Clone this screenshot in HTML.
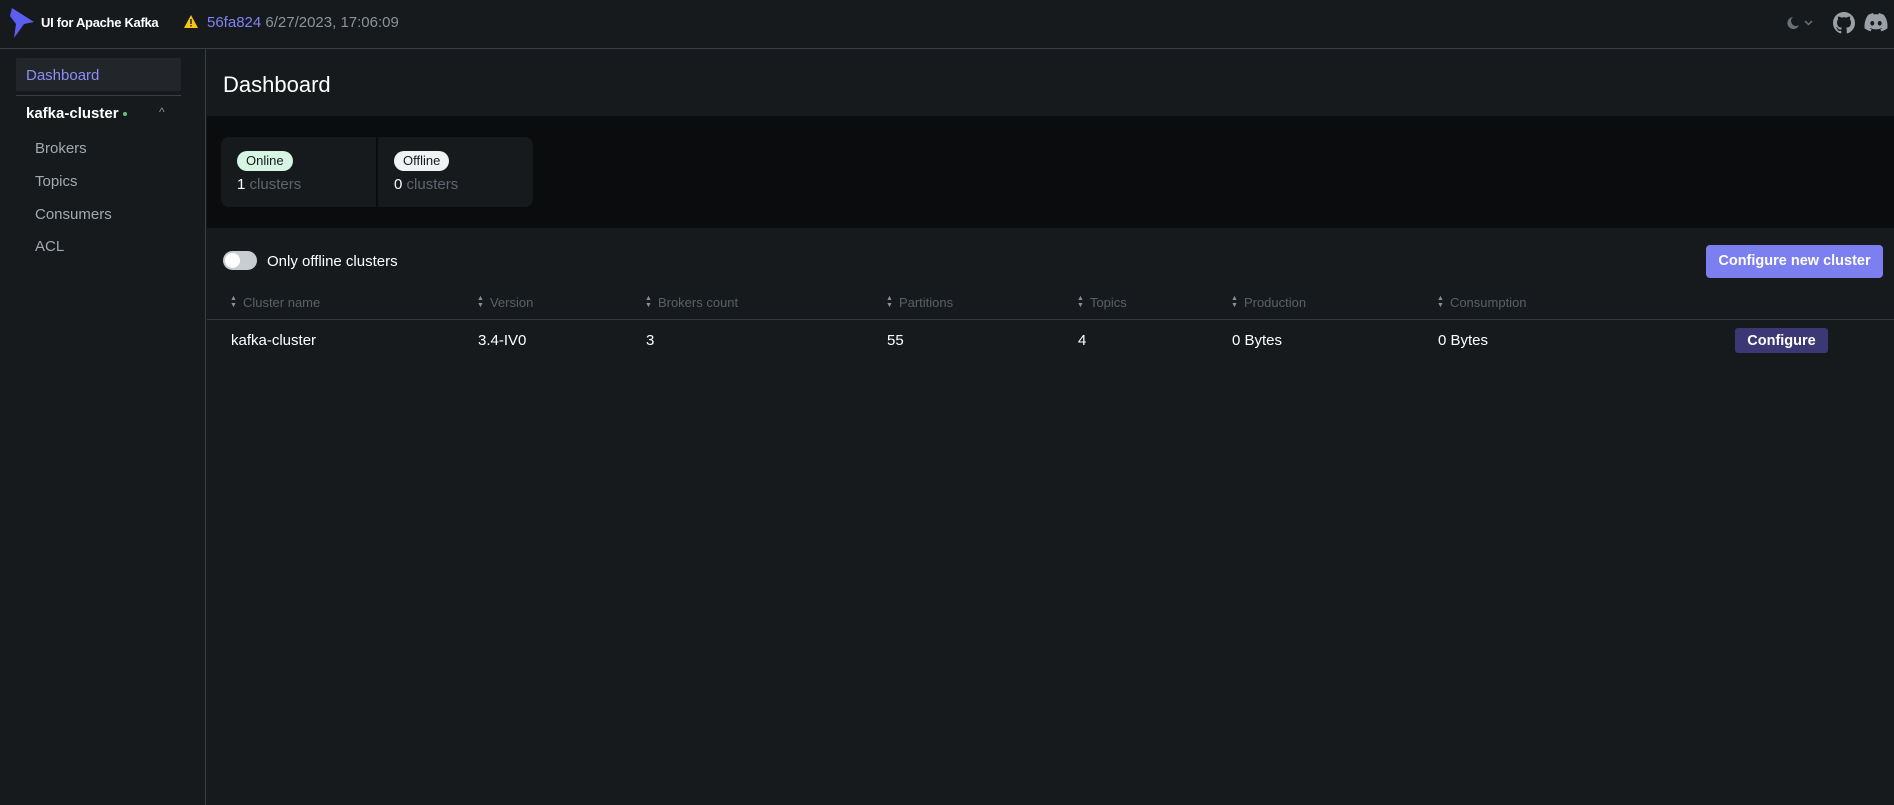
<!DOCTYPE html>
<html><head><meta charset="utf-8"><style>
*{box-sizing:border-box;margin:0;padding:0}
body{width:1894px;height:805px;background:#171a1d;font-family:"Liberation Sans",sans-serif;color:#f1f2f3;position:relative;overflow:hidden}
.a{position:absolute;white-space:nowrap}
.hdr{left:0;top:0;width:1894px;height:49px;border-bottom:1px solid #3a3f45;background:#171a1d}
.side{left:0;top:49px;width:206px;height:756px;border-right:1px solid #3a3f45}
.nav{font-size:15px;color:#a3a9b0}
.th{font-size:13px;color:#5a6068;top:295px}
.th:before{content:"\25B2\A\25BC";white-space:pre;font-size:7px;line-height:7px;color:#8a9098;display:inline-block;vertical-align:middle;margin-right:6px;position:relative;top:-2px}
.td{font-size:15px;color:#fff;top:332px}
</style></head><body>
<div class="a hdr"></div>
<svg class="a" style="left:10px;top:8px" width="24" height="30" viewBox="0 0 24 30"><path d="M2 0 L24 14 L14 16 L4 30 L6 16 L0 8 Z" fill="#5b5ef0"/></svg>
<div class="a" style="left:41px;top:15px;font-size:13px;font-weight:bold;color:#fff;letter-spacing:-0.3px">UI for Apache Kafka</div>
<svg class="a" style="left:184px;top:15px" width="14" height="13" viewBox="0 0 14 13"><path d="M7 0 L14 13 L0 13 Z" fill="#f5c518"/><rect x="6.3" y="4" width="1.4" height="5" fill="#171a1d"/><rect x="6.3" y="10" width="1.4" height="1.4" fill="#171a1d"/></svg>
<div class="a" style="left:207px;top:14px;font-size:15px;color:#7f83f5">56fa824 <span style="color:#8d939a">6/27/2023, 17:06:09</span></div>
<svg class="a" style="left:1785px;top:16px" width="28" height="14" viewBox="0 0 28 14"><path d="M8 1 A6 6 0 1 0 14 9 A5 5 0 0 1 8 1Z" fill="#6b7178"/><path d="M20 5 L23.5 8.5 L27 5" stroke="#6b7178" stroke-width="1.5" fill="none"/></svg>
<svg class="a" style="left:1833px;top:12px" width="22" height="22" viewBox="0 0 16 16"><path fill="#9aa0a6" d="M8 0C3.58 0 0 3.580 0 8c0 3.54 2.29 6.53 5.47 7.59.4.07.55-.17.55-.38 0-.19-.01-.82-.01-1.49-2.01.37-2.530-.49-2.69-.94-.09-.23-.48-.94-.82-1.13-.28-.15-.68-.52-.01-.53.63-.01 1.08.58 1.23.82.72 1.21 1.87.87 2.33.66.07-.52.28-.87.51-1.07-1.78-.2-3.64-.89-3.64-3.95 0-.87.31-1.59.82-2.15-.08-.2-.36-1.02.08-2.12 0 0 .67-.21 2.2.82.64-.18 1.32-.27 2-.27.68 0 1.36.09 2 .27 1.53-1.04 2.2-.82 2.2-.82.44 1.1.16 1.92.08 2.12.51.56.82 1.27.82 2.15 0 3.07-1.87 3.75-3.65 3.95.29.25.54.73.54 1.48 0 1.07-.01 1.93-.01 2.2 0 .21.15.46.55.38A8.013 8.013 0 0016 8c0-4.42-3.58-8-8-8z"/></svg>
<svg class="a" style="left:1864px;top:13px" width="24" height="19" viewBox="0 0 24 19"><path fill="#9aa0a6" d="M20 2A19 19 0 0 0 15 0l-.7 1.4a18 18 0 0 0-4.6 0L9 0A19 19 0 0 0 4 2C1 6.5.2 11 .6 15.4A19 19 0 0 0 6.5 18.4l1.2-2a12 12 0 0 1-1.9-.9l.5-.4a13.5 13.5 0 0 0 11.4 0l.5.4a12 12 0 0 1-1.9.9l1.2 2a19 19 0 0 0 5.9-3C23.9 10.3 22.8 5.8 20 2ZM8.3 12.6c-1.1 0-2-1-2-2.3s.9-2.3 2-2.3 2 1 2 2.3-.9 2.3-2 2.3Zm7.4 0c-1.1 0-2-1-2-2.3s.9-2.3 2-2.3 2 1 2 2.3-.9 2.3-2 2.3Z"/></svg>
<div class="a side"></div>
<div class="a" style="left:16px;top:58px;width:165px;height:33px;background:#22262b;border-radius:2px"></div>
<div class="a" style="left:26px;top:67px;font-size:15px;color:#8b8ff5">Dashboard</div>
<div class="a" style="left:16px;top:95px;width:165px;height:1px;background:#3a3f45"></div>
<div class="a" style="left:26px;top:105px;font-size:15px;font-weight:bold;color:#fff">kafka-cluster <span style="display:inline-block;width:4px;height:4px;border-radius:50%;background:#5ec77d;vertical-align:middle"></span></div>
<div class="a" style="left:159px;top:105px;font-size:12px;color:#8a9098">^</div>
<div class="a nav" style="left:35px;top:140px">Brokers</div>
<div class="a nav" style="left:35px;top:173px">Topics</div>
<div class="a nav" style="left:35px;top:206px">Consumers</div>
<div class="a nav" style="left:35px;top:238px">ACL</div>
<div class="a" style="left:223px;top:72px;font-size:22px;color:#fff">Dashboard</div>
<div class="a" style="left:207px;top:116px;width:1687px;height:112px;background:#0b0c0e"></div>
<div class="a" style="left:221px;top:137px;width:155px;height:70px;background:#171a1d;border-radius:8px 0 0 8px"></div>
<div class="a" style="left:378px;top:137px;width:155px;height:70px;background:#171a1d;border-radius:0 8px 8px 0"></div>
<div class="a" style="left:237px;top:151px;padding:0 9px;height:20px;line-height:20px;border-radius:10px;background:#d6f5e3;color:#171a1d;font-size:13px">Online</div>
<div class="a" style="left:394px;top:151px;padding:0 9px;height:20px;line-height:20px;border-radius:10px;background:#f1f2f3;color:#171a1d;font-size:13px">Offline</div>
<div class="a" style="left:237px;top:176px;font-size:15px;color:#fff">1 <span style="color:#5f656c">clusters</span></div>
<div class="a" style="left:394px;top:176px;font-size:15px;color:#fff">0 <span style="color:#5f656c">clusters</span></div>
<div class="a" style="left:223px;top:251px;width:34px;height:19px;border-radius:10px;background:#c8cdd2"></div>
<div class="a" style="left:225px;top:253px;width:15px;height:15px;border-radius:50%;background:#fff"></div>
<div class="a" style="left:267px;top:253px;font-size:15px;color:#fff">Only offline clusters</div>
<div class="a" style="left:1706px;top:245px;width:177px;height:33px;border-radius:4px;background:#7b7ff0;color:#fff;font-size:14.5px;font-weight:bold;text-align:center;line-height:33px">Configure new cluster</div>
<div class="a th" style="left:230px">Cluster name</div>
<div class="a th" style="left:477px">Version</div>
<div class="a th" style="left:645px">Brokers count</div>
<div class="a th" style="left:886px">Partitions</div>
<div class="a th" style="left:1077px">Topics</div>
<div class="a th" style="left:1231px">Production</div>
<div class="a th" style="left:1437px">Consumption</div>
<div class="a" style="left:207px;top:319px;width:1687px;height:1px;background:#33383e"></div>
<div class="a td" style="left:231px">kafka-cluster</div>
<div class="a td" style="left:478px">3.4-IV0</div>
<div class="a td" style="left:646px">3</div>
<div class="a td" style="left:887px">55</div>
<div class="a td" style="left:1078px">4</div>
<div class="a td" style="left:1232px">0 Bytes</div>
<div class="a td" style="left:1438px">0 Bytes</div>
<div class="a" style="left:1735px;top:328px;width:93px;height:25px;border-radius:3px;background:#3b3875;color:#fff;font-size:14.5px;font-weight:bold;text-align:center;line-height:26px">Configure</div>
</body></html>
